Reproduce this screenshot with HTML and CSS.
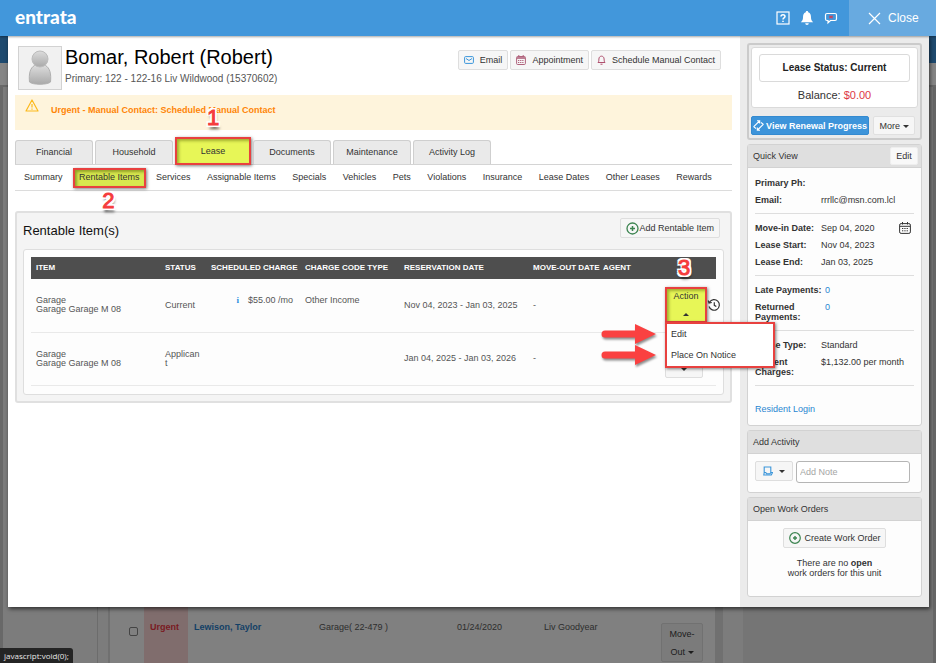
FILE: index.html
```html
<!DOCTYPE html>
<html lang="en">
<head>
<meta charset="utf-8">
<title>Entrata - Bomar, Robert</title>
<link rel="stylesheet" href="styles.css">
</head>
<body>
<div class="backdrop">
  <div class="back-nav"></div>
  <div class="back-sub"></div>
  <div class="back-body">
    <div class="back-side"></div>
    <div class="back-list">
      <div class="back-row">
        <input type="checkbox" aria-label="Select Lewison, Taylor">
        <span class="back-urgent">Urgent</span>
        <a class="back-name" href="#">Lewison, Taylor</a>
        <span>Garage( 22-479 )</span>
        <span>01/24/2020</span>
        <span>Liv Goodyear</span>
        <button class="back-move" type="button">Move-<br>Out <i class="caret"></i></button>
      </div>
    </div>
    <div class="back-gutter"></div>
  </div>
</div>

<header class="topbar">
  <span class="logo">entrata</span>
  <nav class="tools">
    <svg width="14" height="14" viewBox="0 0 14 14" fill="none" stroke="#fff" stroke-width="1.2"><rect x="1" y="1" width="12" height="12"/><path d="M5 5.5c0-2.4 4-2.4 4 0C9 7 7 6.800 7 8.500M7 9.700v1.300" stroke-width="1.500"/></svg>
    <svg width="14" height="16" viewBox="0 0 14 16" fill="#fff"><path d="M7 1c.8 0 1.200.5 1.200 1.200C10.500 3 11 5 11 7.500c0 2.500.8 3.500 2.200 4.800H.8C2.200 11 3 10 3 7.500 3 5 3.500 3 5.800 2.200 5.800 1.500 6.200 1 7 1zM5.200 13.200h3.600a1.800 1.800 0 0 1-3.600 0z"/></svg>
    <svg width="14" height="14" viewBox="0 0 14 14"><path d="M3 2.500h8q1.500 0 1.500 1.500v4q0 1.500-1.500 1.500H6.500L4 11.800V9.500H3Q1.500 9.500 1.500 8V4q0-1.500 1.500-1.500z" fill="none" stroke="#fff" stroke-width="1.200"/><path d="M5.500 4.600l3 2.800M8.500 4.600l-3 2.800M5.200 6h3.600" stroke="#c8455c" stroke-width="1.200"/></svg>
  </nav>
  <button class="close" type="button"><svg width="13" height="13" viewBox="0 0 13 13" stroke="#fff" stroke-width="1.200"><path d="M1 1l11 11M12 1L1 12"/></svg>Close</button>
</header>

<div class="modal">
  <main class="main">
    <div class="person">
      <svg class="avatar" viewBox="0 0 44 44"><defs><linearGradient id="av" x1="0" y1="0" x2="0" y2="1"><stop offset="0" stop-color="#dcdcdc"/><stop offset="1" stop-color="#a9a9a9"/></linearGradient></defs><rect x=".5" y=".5" width="43" height="43" fill="#f1f1f1" stroke="#d2d2d2"/><path d="M11.500 36c-.8-8 .5-14 5-16.500h11c4.500 2.500 5.800 8.500 5 16.500-3 3-18 3-21 0z" fill="url(#av)" stroke="#b0b0b0"/><circle cx="22" cy="13" r="8" fill="url(#av)" stroke="#bcbcbc"/></svg>
      <div class="who">
        <h1>Bomar, Robert (Robert)</h1>
        <p>Primary: 122 - 122-16 Liv Wildwood (15370602)</p>
      </div>
      <div class="contact">
        <button class="btn" type="button"><svg width="10" height="8" viewBox="0 0 10 8" fill="none" stroke="#3a95da"><rect x=".6" y=".6" width="8.800" height="6.800" rx="1"/><path d="M2 2.500l3 2 3-2"/></svg>Email</button>
        <button class="btn" type="button"><svg width="10" height="10" viewBox="0 0 10 10" fill="none" stroke="#b0627c"><rect x=".6" y="1.500" width="8.800" height="8" rx="1"/><path d="M1 3h8" stroke-width="1.600"/><path d="M2.800 0v2M7.200 0v2M2 5.500h6M2 7.500h6" stroke-dasharray="1.300 .8"/></svg>Appointment</button>
        <button class="btn" type="button"><svg width="9" height="10" viewBox="0 0 9 10" fill="none" stroke="#b0506e"><path d="M1 7.500C2 6.500 1.800 5.500 1.900 4 2 .200 7 .200 7.100 4c.1 1.500 0 2.500.9 3.500zM3.500 9.200h2"/></svg>Schedule Manual Contact</button>
      </div>
    </div>

    <div class="alert">
      <svg width="14" height="13" viewBox="0 0 14 13" fill="none" stroke="#fcb91c" stroke-width="1.200" stroke-linejoin="round"><path d="M7 1l6 11H1zM7 5v3.500M7 9.500v1.200"/></svg>
      <strong>Urgent - Manual Contact: Scheduled Manual Contact</strong>
    </div>

    <nav class="tabs">
      <a href="#">Financial</a>
      <a href="#">Household</a>
      <a class="marked" href="#">Lease<span class="step step-above">1</span></a>
      <a href="#">Documents</a>
      <a href="#">Maintenance</a>
      <a href="#">Activity Log</a>
    </nav>
    <nav class="subtabs">
      <a href="#">Summary</a>
      <a class="current" href="#"><span>Rentable Items</span><span class="step step-below">2</span></a>
      <a href="#">Services</a>
      <a href="#">Assignable Items</a>
      <a href="#">Specials</a>
      <a href="#">Vehicles</a>
      <a href="#">Pets</a>
      <a href="#">Violations</a>
      <a href="#">Insurance</a>
      <a href="#">Lease Dates</a>
      <a href="#">Other Leases</a>
      <a href="#">Rewards</a>
    </nav>

    <section class="items">
      <div class="items-head">
        <h2>Rentable Item(s)</h2>
        <button class="btn add" type="button"><svg width="13" height="13" viewBox="0 0 13 13" fill="none" stroke="#3c8450"><circle cx="6.500" cy="6.500" r="5.500" stroke-width="1.300"/><path d="M6.500 4v5M4 6.500h5" stroke-width="1.500"/></svg>Add Rentable Item</button>
      </div>
      <div class="card">
        <table>
          <colgroup><col class="c-item"><col class="c-status"><col class="c-sched"><col class="c-code"><col class="c-res"><col class="c-out"><col class="c-agent"><col class="c-act"></colgroup>
          <thead>
            <tr><th>ITEM</th><th>STATUS</th><th>SCHEDULED CHARGE</th><th>CHARGE CODE TYPE</th><th>RESERVATION DATE</th><th>MOVE-OUT DATE</th><th>AGENT</th><th class="act-head"><span class="step step-head">3</span></th></tr>
          </thead>
          <tbody>
            <tr>
              <td>Garage<br>Garage Garage M 08</td>
              <td class="status">Current</td>
              <td class="charge"><b class="info">i</b>$55.00 /mo</td>
              <td class="code">Other Income</td>
              <td>Nov 04, 2023 - Jan 03, 2025</td>
              <td>-</td>
              <td></td>
              <td class="act">
                <div class="act-wrap">
                  <button class="action marked" type="button">Action<i class="caret up"></i></button>
                  <svg class="history" width="14" height="14" viewBox="0 0 14 14" fill="none" stroke="#333" stroke-width="1.200"><path d="M2.500 4.200A5.300 5.300 0 1 1 2 8.500M1.200 2.500l.8 2.500 2.800-.5M7.300 4.300v3l2 1.300"/></svg>
                  <div class="menu">
                    <a href="#">Edit<svg class="arrow" viewBox="0 0 56 24"><path d="M4 8.500h30V2l21 10-21 10v-6.500H4a3.500 3.500 0 0 1 0-7z" fill="#fa4141"/></svg></a>
                    <a href="#">Place On Notice<svg class="arrow" viewBox="0 0 56 24"><path d="M4 8.500h30V2l21 10-21 10v-6.500H4a3.500 3.500 0 0 1 0-7z" fill="#fa4141"/></svg></a>
                  </div>
                </div>
              </td>
            </tr>
            <tr>
              <td>Garage<br>Garage Garage M 08</td>
              <td class="status">Applicant</td>
              <td></td>
              <td></td>
              <td>Jan 04, 2025 - Jan 03, 2026</td>
              <td>-</td>
              <td></td>
              <td class="act"><div class="act-wrap"><button class="action plain" type="button" aria-label="Action"><i class="caret"></i></button></div></td>
            </tr>
          </tbody>
        </table>
      </div>
    </section>
  </main>

  <aside class="side">
    <section class="summary">
      <div class="lease">
        <div class="lease-status">Lease Status: Current</div>
        <div class="balance">Balance: <span>$0.00</span></div>
      </div>
      <div class="lease-actions">
        <button class="renew" type="button"><svg width="11" height="11" viewBox="0 0 11 11" fill="none" stroke="#fff" stroke-width="1.100"><path d="M.5 6.800L6.500 1M4 .8h2.700v2.700M.6 6.600L3 8.500M10.500 4.200L4.500 10M7 10.200H4.300V7.500M10.400 4.400L8 2.500"/></svg>View Renewal Progress</button>
        <button class="more" type="button">More <i class="caret"></i></button>
      </div>
    </section>

    <section class="box quick">
      <div class="box-head"><h3>Quick View</h3><button class="edit" type="button">Edit</button></div>
      <div class="box-body">
        <dl>
          <div><dt>Primary Ph:</dt><dd></dd></div>
          <div><dt>Email:</dt><dd>rrrllc@msn.com.lcl</dd></div>
        </dl>
        <dl>
          <div><dt>Move-in Date:</dt><dd>Sep 04, 2020</dd><svg class="cal" width="12" height="12" viewBox="0 0 12 12" fill="none" stroke="#333"><rect x=".6" y="1.600" width="10.800" height="9.800" rx="1.500"/><path d="M1 4.300h10M3.500 0v2.500M8.500 0v2.500"/><path d="M3 6.500h6.500M3 8.800h6.500" stroke-dasharray="1.300 1"/></svg></div>
          <div><dt>Lease Start:</dt><dd>Nov 04, 2023</dd></div>
          <div><dt>Lease End:</dt><dd>Jan 03, 2025</dd></div>
        </dl>
        <dl class="counts">
          <div><dt class="one-line">Late Payments:</dt><dd><a href="#">0</a></dd></div>
          <div><dt>Returned Payments:</dt><dd><a href="#">0</a></dd></div>
        </dl>
        <dl>
          <div><dt>Lease Type:</dt><dd>Standard</dd></div>
          <div><dt>Current Charges:</dt><dd>$1,132.00 per month</dd></div>
        </dl>
        <a class="login" href="#">Resident Login</a>
      </div>
    </section>

    <section class="box">
      <div class="box-head"><h3>Add Activity</h3></div>
      <div class="box-body note">
        <button class="btn note-type" type="button" aria-label="Activity type"><svg width="10" height="10" viewBox="0 0 10 10" fill="none" stroke="#3a95da" stroke-width="1.100"><path d="M1.200 7V1h6.600v5.500M1.200 6.500L.8 9h7.500L9.500 6.500H7.800L7 7.800H3.500L2.800 6.500H1.200"/></svg><i class="caret"></i></button>
        <input type="text" placeholder="Add Note" aria-label="Add Note">
      </div>
    </section>

    <section class="box">
      <div class="box-head"><h3>Open Work Orders</h3></div>
      <div class="box-body orders">
        <button class="btn" type="button"><svg width="12" height="12" viewBox="0 0 12 12" fill="none" stroke="#3c8450"><circle cx="6" cy="6" r="5.300" stroke-width="1.200"/><path d="M6 4v4M4 6h4" stroke-width="1.400"/></svg>Create Work Order</button>
        <p>There are no <b>open</b><br>work orders for this unit</p>
      </div>
    </section>
  </aside>
</div>
<div class="hint">javascript:void(0);</div>
</body>
</html>
```

FILE: styles.css
```css
* { box-sizing: border-box; }
body {
  position: relative;
  margin: 0;
  min-height: 100vh;
  font: 9px/10px "Liberation Sans", Arial, sans-serif;
  color: #333;
  background: #757575;
}
h1, h2, h3, p, dl, dd { margin: 0; font-weight: normal; }
a { color: inherit; text-decoration: none; }
button, input { font: inherit; color: inherit; margin: 0; }
button { padding: 0; cursor: pointer; }
svg { flex: none; display: block; }

.caret {
  display: inline-block;
  border: 3px solid transparent;
  border-top-color: currentColor;
  border-bottom: 0;
  vertical-align: middle;
}
.caret.up { border-bottom: 3px solid currentColor; border-top: 0; }

/* dimmed page behind the dialog */
.backdrop { position: absolute; inset: 0; display: flex; flex-direction: column; overflow: hidden; }
.back-nav { height: 63px; background: #1e4a6f; }
.back-sub { height: 24px; background: #858585; border-bottom: 2px solid #686868; }
.back-body { flex: 1; display: flex; background: #7c7c7c; }
.back-side { width: 98px; border-right: 1px solid #6c6c6c; border-left: 3px solid #686868; }
.back-list {
  flex: 1;
  display: flex;
  flex-direction: column;
  justify-content: flex-end;
  margin: 0 20px 0 10px;
  padding: 0 12px 0 14px;
  border: solid #707070;
  border-width: 0 8px 0 2px;
  background: #808080;
}
.back-gutter { width: 193px; background: #757575; border-right: 3px solid #666; }
.back-row {
  display: grid;
  grid-template-columns: 20px 44px 131px 138px 87px 110px 1fr;
  height: 56px;
  line-height: 12px;
  color: #2d2d2d;
}
.back-row > span, .back-row > a { padding-top: 14px; }
.back-row input {
  appearance: none;
  width: 9px;
  height: 9px;
  margin: 20px 0 0 5px;
  border: 1px solid #444;
  border-radius: 2px;
}
.back-row .back-urgent { padding-left: 6px; background: #806d6d; color: #7a1a22; font-weight: bold; }
.back-row .back-name { padding-left: 6px; color: #123f66; font-weight: bold; }
.back-move {
  width: 42px;
  height: 39px;
  margin-top: 16px;
  justify-self: end;
  line-height: 18px;
  color: #1c1c1c;
  background: #7b7b7b;
  border: 1px solid #717171;
  border-radius: 2px;
}
.hint {
  position: fixed;
  left: 0;
  bottom: 0;
  padding: 2px 4px;
  font: 8px/11px "Open Sans", sans-serif;
  color: #e8e8e8;
  background: #242424;
  border-top-right-radius: 3px;
}

.topbar {
  position: relative;
  z-index: 2;
  display: flex;
  align-items: center;
  height: 36px;
  padding-left: 15px;
  color: #fff;
  background: #4297db;
  box-shadow: 0 1px 2px rgba(0, 0, 0, .35);
}
.logo { flex: 1; padding-bottom: 2px; font: 900 19px/32px Lato, sans-serif; }
.tools { display: flex; align-items: center; gap: 10px; margin-right: 11px; }
.close {
  display: flex;
  align-items: center;
  gap: 7px;
  width: 87px;
  height: 36px;
  padding-left: 19px;
  font-size: 12px;
  color: #fff;
  background: #68aae0;
  border: 0;
}

.modal {
  position: relative;
  display: flex;
  margin: 0 7px 56px 8px;
  background: #fff;
  box-shadow: 1px 2px 4px rgba(0, 0, 0, .6);
}
.main { flex: 1; min-width: 0; padding: 10px 8px 0 7px; }
.btn {
  display: flex;
  align-items: center;
  gap: 6px;
  height: 20px;
  padding: 0 5px;
  background: #f6f6f6;
  border: 1px solid #dedede;
  border-radius: 2px;
}

.person { display: flex; height: 43px; padding: 0 11px 0 3px; }
.avatar { width: 44px; height: 44px; }
.who { flex: 1; padding-left: 3px; }
.who h1 { font-size: 20px; line-height: 22px; color: #000; }
.who p { margin-top: 5px; font-size: 10px; line-height: 12px; color: #555; }
.contact { display: flex; gap: 2px; margin-top: 4px; }

.alert {
  display: flex;
  gap: 12px;
  height: 35px;
  margin-top: 6px;
  padding: 4px 10px;
  color: #ff8408;
  background: #fef4dc;
}
.alert strong { line-height: 22px; }

.tabs { display: flex; gap: 2px; margin-top: 10px; border-bottom: 1px solid #d4d4d4; }
.tabs a {
  position: relative;
  width: 78px;
  height: 24px;
  line-height: 22px;
  text-align: center;
  background: #eaeaea;
  border: 1px solid #cfcfcf;
  border-bottom: 0;
  border-radius: 3px 3px 0 0;
}
.marked, .tabs .marked {
  background: #e7f657;
  border: 2px solid #e8413f;
  border-radius: 0;
  box-shadow: inset 2px 2px 3px rgba(80, 90, 0, .45), 1px 1px 3px rgba(0, 0, 0, .5);
}
.tabs .marked { width: 76px; height: 28px; margin: -3px 0 -1px; line-height: 25px; }

.step {
  position: absolute;
  z-index: 4;
  font: 22px/22px "Liberation Sans", sans-serif;
  color: #f53c3c;
  text-shadow:
    2px 0 #fff, -2px 0 #fff, 0 2px #fff, 0 -2px #fff,
    2px 2px #fff, -2px 2px #fff, 2px -2px #fff, -2px -2px #fff,
    1px 4px 3px rgba(0, 0, 0, .7);
  -webkit-text-stroke: 1px #f53c3c;
}
.step-above { left: 30px; top: -32px; }
.step-below { left: 50%; margin-left: -7px; }
.step-head { left: 17px; top: 0; }

.subtabs {
  display: flex;
  justify-content: space-between;
  height: 26px;
  padding: 0 20px 0 9px;
  line-height: 24px;
  border-bottom: 1px solid #dcdcdc;
}
.subtabs .current { position: relative; }
.current::before {
  content: "";
  position: absolute;
  inset: 3px -6px 2px;
  background: #d8e84e;
  border: 2px solid #e8413f;
  box-shadow: inset 2px 2px 3px rgba(80, 90, 0, .5), 1px 1px 3px rgba(0, 0, 0, .5);
}
.current span { position: relative; }
.current .step { position: absolute; top: 25px; }

.items {
  margin-top: 20px;
  padding: 5px 6px 6px;
  background: #f4f4f4;
  border: 2px solid #e0e0e0;
  border-radius: 3px;
}
.items-head { display: flex; justify-content: space-between; padding-right: 4px; height: 31px; }
.items-head h2 { font-size: 13px; line-height: 26px; color: #111; }
.add { gap: 0; padding: 0 5px; }
.card { padding: 7px 7px 8px; background: #fdfdfd; border: 1px solid #dedede; border-radius: 3px; }
table { width: 100%; table-layout: fixed; border-collapse: collapse; }
.c-item { width: 129px; }
.c-status { width: 46px; }
.c-sched { width: 94px; }
.c-code { width: 99px; }
.c-res { width: 129px; }
.c-out { width: 70px; }
.c-agent { width: 63px; }
th {
  height: 22px;
  padding: 0 0 0 5px;
  font-size: 8px;
  text-align: left;
  white-space: nowrap;
  color: #fff;
  background: #4e4e4e;
}
td { height: 53px; padding: 0 0 0 5px; color: #555; border-bottom: 1px solid #e9e9e9; line-height: 9px; }
.status { padding-right: 6px; overflow-wrap: anywhere; }
td.charge, td.code { padding-bottom: 10px; }
td.charge { padding-right: 7px; text-align: right; }
.info { margin-right: 9px; font-family: "Liberation Serif", serif; color: #2c8de0; }
.act-head { position: relative; }
.act-wrap { position: relative; display: flex; align-items: center; }
.action {
  display: flex;
  flex-direction: column;
  align-items: center;
  justify-content: space-between;
  width: 42px;
  height: 36px;
  padding: 3px 0 5px;
  flex: none;
  color: #333;
}
td.act { padding-left: 4px; }
.action.plain {
  justify-content: flex-end;
  width: 38px;
  height: 38px;
  background: #f6f6f6;
  border: 1px solid #dedede;
  border-radius: 2px;
  padding: 6px 0;
}
.menu {
  position: absolute;
  z-index: 3;
  left: 0;
  top: 35px;
  width: 110px;
  padding: 1px 0;
  color: #333;
  background: #fff;
  border: 2px solid #e8413f;
  box-shadow: 1px 1px 3px rgba(0, 0, 0, .5);
}
.menu a { position: relative; display: block; padding-left: 4px; line-height: 19px; }
.menu a + a { margin-top: 2px; }
.arrow {
  position: absolute;
  right: 100%;
  top: -3px;
  width: 56px;
  height: 24px;
  margin-right: 10px;
  filter: drop-shadow(1px 2px 1px rgba(0, 0, 0, .45));
}

.side { width: 189px; padding: 7px 7px 10px; background: #ebebeb; }
.summary { padding: 2px 2px 3px; border: 2px solid #cbcbcb; border-radius: 3px; }
.lease { padding: 6px 7px; background: #fff; border: 1px solid #dadada; border-radius: 3px; }
.lease-status {
  height: 28px;
  font-size: 10px;
  line-height: 26px;
  font-weight: bold;
  text-align: center;
  color: #222;
  border: 1px solid #dadada;
  border-radius: 3px;
}
.balance { margin-top: 7px; font-size: 11px; line-height: 12px; text-align: center; }
.balance span { color: #dd3846; }
.lease-actions { display: flex; gap: 4px; margin-top: 8px; padding-right: 3px; }
.renew {
  flex: 1;
  display: flex;
  align-items: center;
  justify-content: center;
  gap: 2px;
  height: 19px;
  font-weight: bold;
  white-space: nowrap;
  color: #fff;
  background: #3d94da;
  border: 1px solid #348ad0;
  border-radius: 2px;
}
.more { width: 42px; background: #f6f6f6; border: 1px solid #e0e0e0; border-radius: 2px; }

.box { margin-top: 4px; background: #fdfdfd; border: 1px solid #d2d2d2; border-radius: 3px; }
.box-head {
  display: flex;
  align-items: center;
  justify-content: space-between;
  height: 23px;
  padding: 0 3px 0 5px;
  background: #dfdfdf;
  border-bottom: 1px solid #d2d2d2;
}
.box-head h3 { font-size: 9px; }
.edit { width: 28px; height: 18px; background: #f8f8f8; border: 1px solid #eee; border-radius: 2px; }
.box-body { padding: 1px 7px; }
.quick .box-body { min-height: 257px; }
.quick dl { padding: 9px 0 8px; border-bottom: 1px solid #dedede; }
.quick dl > div { display: grid; grid-template-columns: 66px 1fr auto; margin-bottom: 7px; }
.quick dl > div:last-child { margin-bottom: 0; }
.quick dt { font-weight: bold; }
.quick .one-line { white-space: nowrap; }
.counts dd { padding-left: 4px; }
.quick a { color: #2a86d1; }
.cal { margin: -5px 3px -5px 0; align-self: center; }
.login { display: inline-block; margin-top: 18px; }
.note { display: flex; gap: 3px; padding: 7px 11px 9px 7px; }
.note-type { gap: 6px; padding: 0 7px; }
.note input {
  flex: 1;
  min-width: 0;
  height: 22px;
  padding: 0 3px;
  background: #fff;
  border: 1px solid #b5b5b5;
  border-radius: 3px;
}
.note input::placeholder { color: #a5a5a5; }
.orders { display: flex; flex-direction: column; align-items: center; padding: 7px 7px 18px; text-align: center; }
.orders p { margin-top: 10px; }
.orders .btn { gap: 4px; }
```
